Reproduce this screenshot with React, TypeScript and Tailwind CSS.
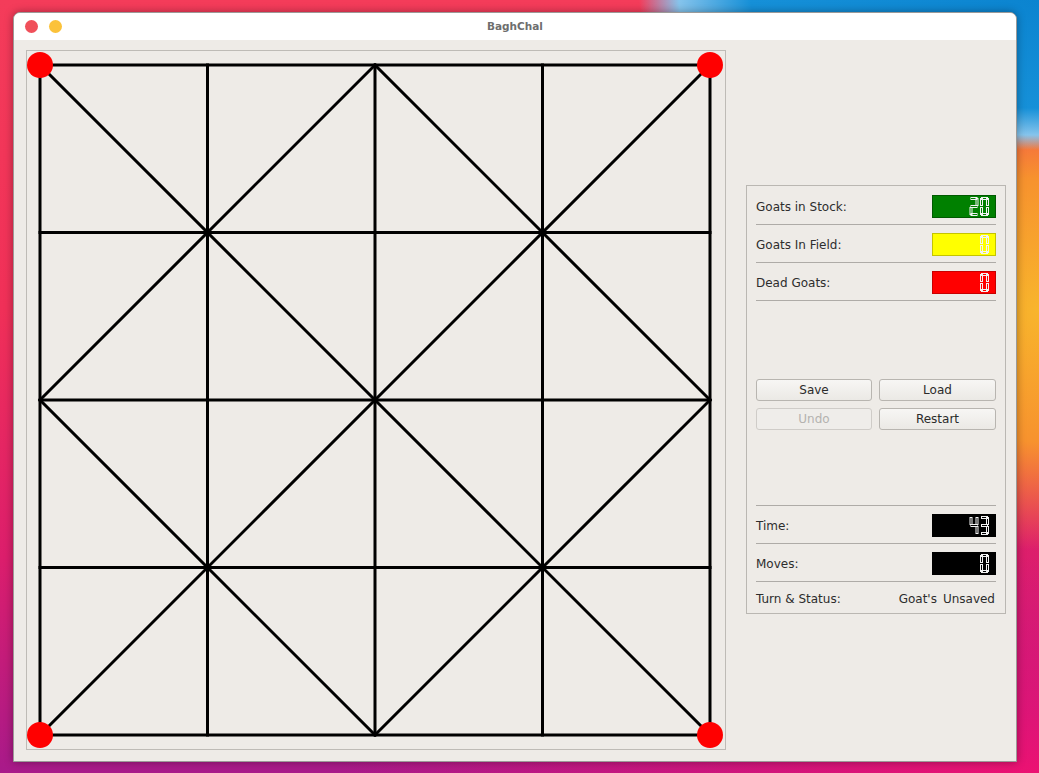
import React from "react";

const SEGMENTS: Record<string, string> = {
  "0": "abcdef",
  "1": "bc",
  "2": "abged",
  "3": "abgcd",
  "4": "fgbc",
  "5": "afgcd",
  "6": "afgedc",
  "7": "abc",
  "8": "abcdefg",
  "9": "abcdfg",
};

// outline segment boxes for a 9x19 digit cell
const SEG_RECTS: Record<string, [number, number, number, number]> = {
  a: [1.5, 0.5, 6, 2],
  b: [6.5, 1.5, 2, 7],
  c: [6.5, 10.5, 2, 7],
  d: [1.5, 16.5, 6, 2],
  e: [0.5, 10.5, 2, 7],
  f: [0.5, 1.5, 2, 7],
  g: [1.5, 8.5, 6, 2],
};

function LcdNumber({ value, box }: { value: string; box: string }) {
  const digits = value.split("");
  return (
    <div className={`w-[64px] h-[23px] border ${box}`}>
      <svg width="62" height="21" viewBox="0 0 62 21">
        {digits.map((d, i) => {
          const fromRight = digits.length - 1 - i;
          const x = 47 - fromRight * 10.5;
          return (
            <g key={i} transform={`translate(${x},1)`}>
              {SEGMENTS[d].split("").map((s) => {
                const [rx, ry, rw, rh] = SEG_RECTS[s];
                return (
                  <rect
                    key={s}
                    x={rx}
                    y={ry}
                    width={rw}
                    height={rh}
                    fill="none"
                    stroke="#f2f2f2"
                    strokeWidth="1"
                  />
                );
              })}
            </g>
          );
        })}
      </svg>
    </div>
  );
}

function StatRow({ label, children }: { label: string; children: React.ReactNode }) {
  return (
    <div className="flex items-center justify-between h-[23px]">
      <span>{label}</span>
      {children}
    </div>
  );
}

function Sep() {
  return <div className="h-px bg-[#aeaba7]" />;
}

function Btn({ label, disabled }: { label: string; disabled?: boolean }) {
  return (
    <button
      className={
        disabled
          ? "h-[22px] rounded-[3px] border border-[#cfccc8] bg-[#efedea] text-[#b4b2af]"
          : "h-[22px] rounded-[3px] border border-[#b8b5b0] bg-[linear-gradient(180deg,#f7f6f4,#ebe9e5)] text-[#2b2b2b]"
      }
    >
      {label}
    </button>
  );
}

function Board() {
  const s = 167.5;
  const x0 = 13;
  const y0 = 14;
  const px = (i: number) => x0 + i * s;
  const py = (j: number) => y0 + j * s;
  const lines: [number, number, number, number][] = [];
  for (let i = 0; i <= 4; i++) {
    lines.push([px(i), py(0), px(i), py(4)]);
    lines.push([px(0), py(i), px(4), py(i)]);
  }
  // diagonals
  lines.push([px(0), py(0), px(4), py(4)]);
  lines.push([px(4), py(0), px(0), py(4)]);
  lines.push([px(2), py(0), px(0), py(2)]);
  lines.push([px(2), py(0), px(4), py(2)]);
  lines.push([px(0), py(2), px(2), py(4)]);
  lines.push([px(4), py(2), px(2), py(4)]);
  const corners = [
    [px(0), py(0)],
    [px(4), py(0)],
    [px(0), py(4)],
    [px(4), py(4)],
  ];
  return (
    <svg width="698" height="698" viewBox="0 0 698 698">
      {lines.map(([a, b, c, d], i) => (
        <line key={i} x1={a} y1={b} x2={c} y2={d} stroke="#000" strokeWidth="3" strokeLinecap="square" />
      ))}
      {corners.map(([cx, cy], i) => (
        <circle key={i} cx={cx} cy={cy} r="13" fill="#ff0000" />
      ))}
    </svg>
  );
}

export default function App() {
  return (
    <div className="w-[1039px] h-[773px] overflow-hidden pt-[12px] pl-[13px] bg-[radial-gradient(ellipse_400px_150px_at_100%_0%,#0b84d0_0%,#1690d8_72%,#86c4ec_90%,transparent_100%),radial-gradient(ellipse_220px_240px_at_100%_310px,#f8b52c_0%,#f7922e_55%,transparent_100%),radial-gradient(ellipse_700px_220px_at_100%_100%,#ec1272_0%,transparent_100%),linear-gradient(180deg,#f43c5a_0%,#f03058_40%,#dc1e6c_72%,#a81a8a_100%)]">
      <div className="w-[1004px] h-[750px] flex flex-col rounded-t-[7px] border border-[#9c9a98] bg-[#eeebe7] shadow-[0_0_8px_rgba(0,0,0,0.35)] overflow-hidden font-['DejaVu_Sans',sans-serif]">
        {/* title bar */}
        <div className="h-[27px] bg-white flex items-center relative shrink-0">
          <div className="flex items-center gap-[11px] pl-[11px]">
            <span className="w-[13px] h-[13px] rounded-full bg-[#f0505a]" />
            <span className="w-[13px] h-[13px] rounded-full bg-[#fbc23a]" />
          </div>
          <span className="absolute left-0 right-0 text-center text-[10.5px] font-bold text-[#6e6e6e] pointer-events-none">
            BaghChal
          </span>
        </div>

        {/* content */}
        <div className="flex pt-[10px] pl-[12px] gap-[20px] text-[12px] text-[#2d2d2d]">
          <div className="w-[700px] h-[700px] border border-[#bebbb6]">
            <Board />
          </div>

          <div className="mt-[135px] w-[260px] h-[429px] border border-[#bab7b2] flex flex-col px-[9px] pt-[9px] pb-[2px]">
            <div className="flex flex-col">
              <StatRow label="Goats in Stock:">
                <LcdNumber value="20" box="bg-[#008000] border-[#005a00]" />
              </StatRow>
              <div className="mt-[6px] mb-[8px]"><Sep /></div>
              <StatRow label="Goats In Field:">
                <LcdNumber value="0" box="bg-[#ffff00] border-[#c4c400]" />
              </StatRow>
              <div className="mt-[6px] mb-[8px]"><Sep /></div>
              <StatRow label="Dead Goats:">
                <LcdNumber value="0" box="bg-[#ff0000] border-[#c80000]" />
              </StatRow>
              <div className="mt-[6px]"><Sep /></div>
            </div>

            <div className="flex-1 flex flex-col justify-center pt-[2px]">
              <div className="grid grid-cols-[116px_117px] gap-x-[7px] gap-y-[7px]">
                <Btn label="Save" />
                <Btn label="Load" />
                <Btn label="Undo" disabled />
                <Btn label="Restart" />
              </div>
            </div>

            <div className="flex flex-col">
              <div className="mb-[8px]"><Sep /></div>
              <StatRow label="Time:">
                <LcdNumber value="43" box="bg-black border-black" />
              </StatRow>
              <div className="mt-[6px] mb-[8px]"><Sep /></div>
              <StatRow label="Moves:">
                <LcdNumber value="0" box="bg-black border-black" />
              </StatRow>
              <div className="mt-[6px] mb-[5px]"><Sep /></div>
              <div className="flex items-center justify-between h-[24px]">
                <span>Turn &amp; Status:</span>
                <span className="flex gap-[6px] pr-px">
                  <span>Goat's</span>
                  <span>Unsaved</span>
                </span>
              </div>
            </div>
          </div>
        </div>
      </div>
    </div>
  );
}
